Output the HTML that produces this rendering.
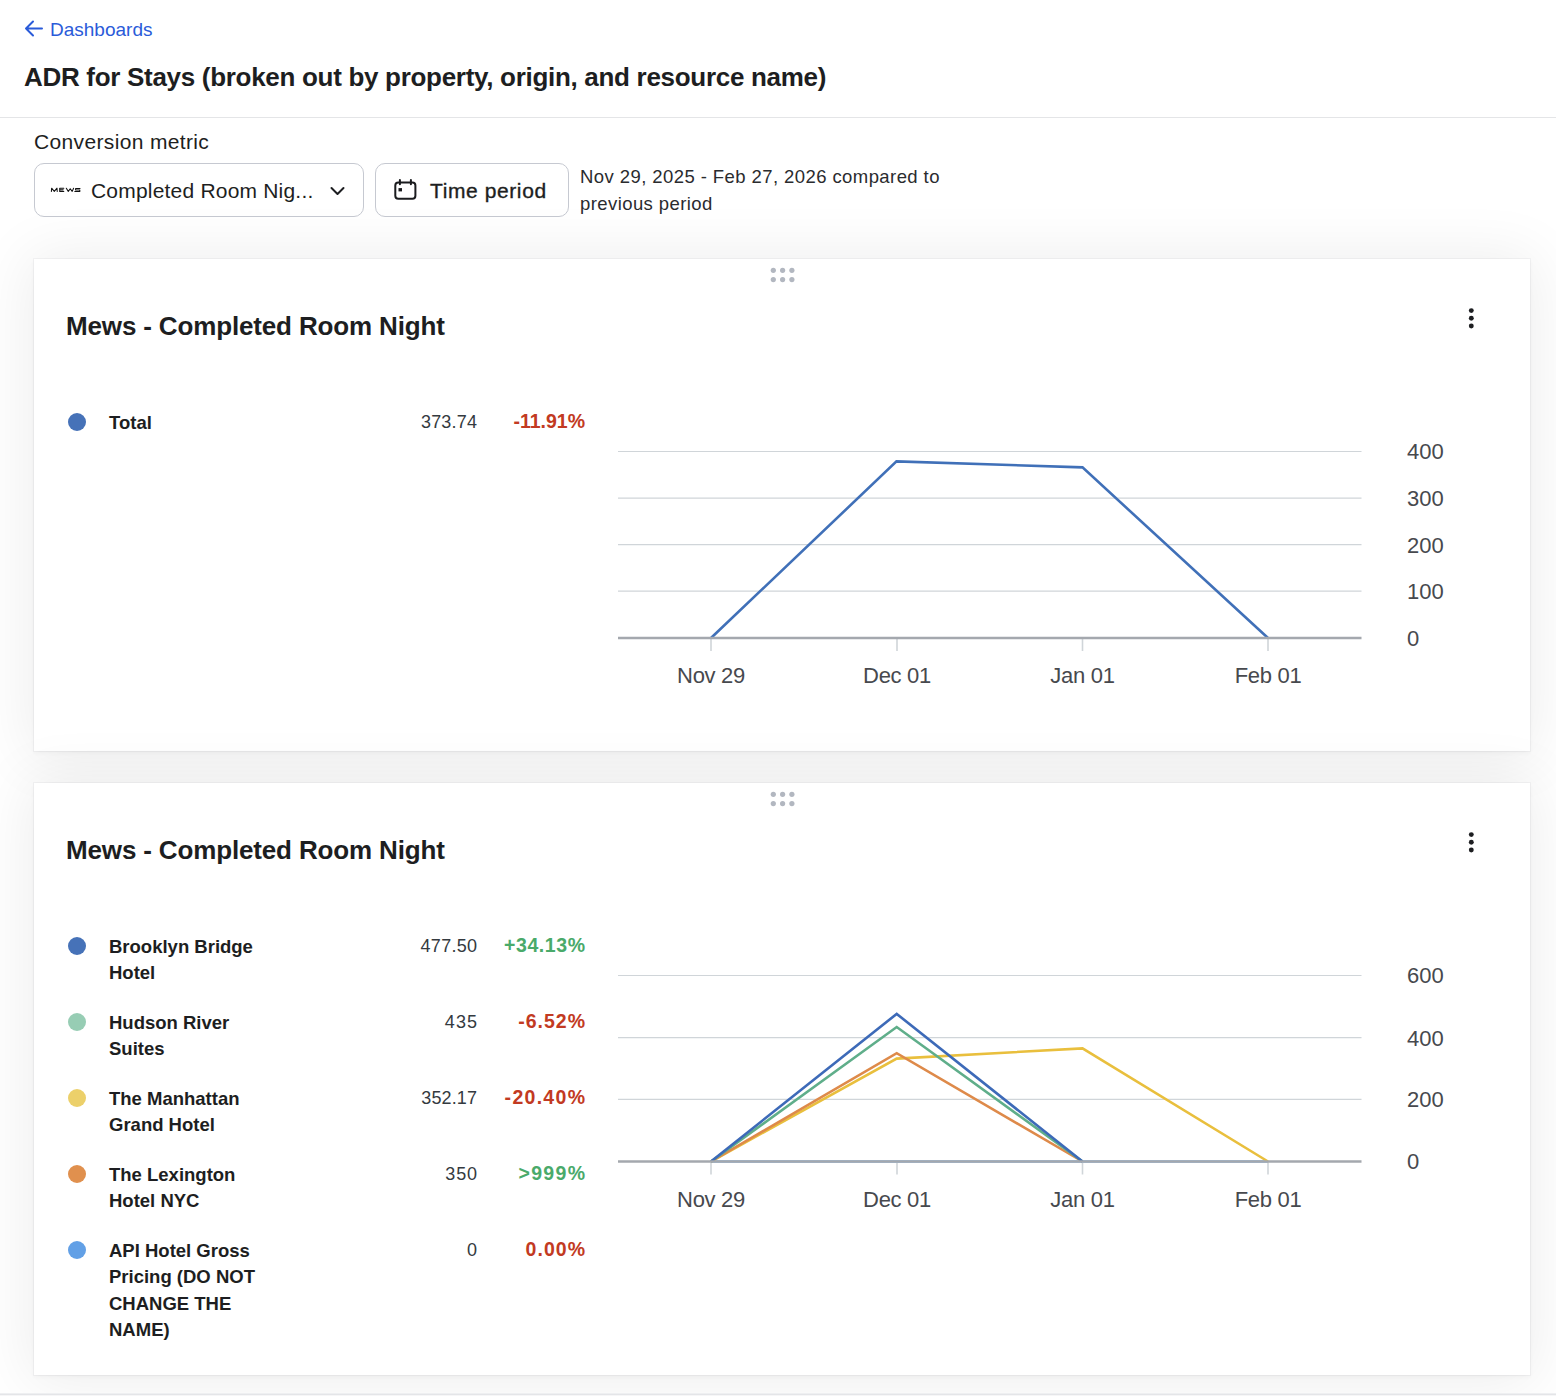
<!DOCTYPE html>
<html><head><meta charset="utf-8">
<style>
*{box-sizing:border-box;margin:0;padding:0}
html,body{width:1556px;height:1396px;overflow:hidden;background:#fff}
body{position:relative;font-family:"Liberation Sans",sans-serif;color:#1d1e21}
.abs{position:absolute;white-space:nowrap}
.back{left:50px;top:18px;font-size:19px;line-height:24px;color:#2a5bd9}
.title{left:24px;top:62px;font-size:26px;line-height:30px;font-weight:700;letter-spacing:-0.3px;color:#1d1e21}
.hr{left:0;top:117px;width:1556px;height:1px;background:#e4e5e7}
.lbl{left:34px;top:129px;font-size:21px;line-height:26px;color:#1d1e21;letter-spacing:0.35px}
.btn{position:absolute;border:1px solid #c6c9d1;border-radius:10px;background:#fff}
.btntext{font-size:21px;line-height:26px;color:#1d1e21}
.date{left:580px;top:164px;font-size:18.5px;line-height:26.7px;color:#2a2b2e;letter-spacing:0.42px;white-space:normal;width:400px}
.card{position:absolute;left:34px;width:1496px;background:#fff;box-shadow:0 0 0 1px rgba(30,30,45,0.04),0 2px 5px rgba(0,0,0,0.035),0 2px 56px 6px rgba(0,0,0,0.07)}
.ctitle{font-size:26px;line-height:30px;font-weight:700;color:#1d1e21;letter-spacing:-0.15px}
.leg{position:absolute;font-size:18.5px;line-height:26.6px;font-weight:700;color:#1d1e21;white-space:nowrap;width:200px}
.val{position:absolute;font-size:18px;line-height:26px;color:#343a40;text-align:right;width:100px;letter-spacing:0.2px}
.pct{position:absolute;font-size:19.5px;line-height:26px;font-weight:700;text-align:right;width:120px}
.red{color:#c23a22}.green{color:#4aaa6a}
.dot{position:absolute;width:18px;height:18px;border-radius:50%}
.axl{font-family:"Liberation Sans",sans-serif;font-size:22px;fill:#47494e}
</style></head><body>

<svg class="abs" style="left:24px;top:20px" width="19" height="17" viewBox="0 0 19 17"><path d="M9 1.5 L2 8.5 L9 15.5 M2 8.5 H18" fill="none" stroke="#2a5bd9" stroke-width="2" stroke-linecap="round" stroke-linejoin="round"/></svg>
<div class="abs back">Dashboards</div>
<div class="abs title">ADR for Stays (broken out by property, origin, and resource name)</div>
<div class="abs hr"></div>
<div class="abs lbl">Conversion metric</div>
<div class="btn" style="left:34px;top:163px;width:330px;height:54px">
  <div class="abs btntext" style="left:56px;top:14px;letter-spacing:0.2px">Completed Room Nig...</div>
  <svg class="abs" style="left:295px;top:22px" width="15" height="10" viewBox="0 0 15 10"><path d="M1.5 2 L7.5 8 L13.5 2" fill="none" stroke="#1d1e21" stroke-width="2" stroke-linecap="round" stroke-linejoin="round"/></svg>
</div>
<div class="btn" style="left:375px;top:163px;width:194px;height:54px">
  <div class="abs btntext" style="left:54px;top:14px;letter-spacing:0.6px;-webkit-text-stroke:0.35px #1d1e21">Time period</div>
</div>
<svg class="abs" style="left:392px;top:177px" width="26" height="26" viewBox="0 0 26 26"><rect x="3.3" y="5.6" width="20.1" height="16.1" rx="3" fill="none" stroke="#1a1b1e" stroke-width="2"/><path d="M7.9 3v4.2M18.9 3v4.2" stroke="#1a1b1e" stroke-width="2" stroke-linecap="round" fill="none"/><rect x="6.5" y="11.1" width="3.5" height="3.3" fill="#1a1b1e"/></svg>
<svg class="abs" style="left:50px;top:186px" width="32" height="8" viewBox="0 0 32 8"><g fill="none" stroke="#111" stroke-width="1.05" stroke-linejoin="round" stroke-linecap="round"><path d="M1.4 5.5L1.6 2.2L4.3 5.4L7 2.2L7.2 5.5"/><path d="M13.8 2.3H9.7V5.4H13.8M9.7 3.85H13.2"/><path d="M16.3 2.3L18.3 5.4L20.2 2.7L22.2 5.4L23.6 2.3"/><path d="M30 2.4H25.6V3.9H29.8V5.4H24.8"/></g></svg>
<div class="abs date">Nov 29, 2025 - Feb 27, 2026 compared to previous period</div>
<div class="card" style="top:259px;height:492px"></div>
<div class="card" style="top:783px;height:592px"></div>

<svg class="abs" style="left:768px;top:265px" width="30" height="20" viewBox="0 0 30 20"><circle cx="5.3" cy="5.3" r="2.6" fill="#b2b7c0"/><circle cx="5.3" cy="14.6" r="2.6" fill="#b2b7c0"/><circle cx="14.6" cy="5.3" r="2.6" fill="#b2b7c0"/><circle cx="14.6" cy="14.6" r="2.6" fill="#b2b7c0"/><circle cx="23.9" cy="5.3" r="2.6" fill="#b2b7c0"/><circle cx="23.9" cy="14.6" r="2.6" fill="#b2b7c0"/></svg>
<div class="abs ctitle" style="left:66px;top:311px">Mews - Completed Room Night</div>
<svg class="abs" style="left:1464px;top:303px" width="14" height="30" viewBox="0 0 14 30"><circle cx="7.3" cy="7.6" r="2.45" fill="#1d1e21"/><circle cx="7.3" cy="15.3" r="2.45" fill="#1d1e21"/><circle cx="7.3" cy="23" r="2.45" fill="#1d1e21"/></svg>
<div class="dot" style="left:67.7px;top:412.70000000000005px;background:#4672b8"></div>
<div class="leg" style="left:109px;top:409.6px">Total</div>
<div class="val" style="left:377px;top:408.6px"><span style="letter-spacing:0.2px;margin-right:-0.2px">373.74</span></div>
<div class="pct red" style="left:465px;top:408.3px"><span style="letter-spacing:0px;margin-right:-0px">-11.91%</span></div>
<svg class="abs" style="left:0;top:430px" width="1556" height="330" viewBox="0 430 1556 330">
<line x1="618" x2="1361.5" y1="451.5" y2="451.5" stroke="#d0d5d9" stroke-width="1.2"/>
<line x1="618" x2="1361.5" y1="498.1" y2="498.1" stroke="#d0d5d9" stroke-width="1.2"/>
<line x1="618" x2="1361.5" y1="544.7" y2="544.7" stroke="#d0d5d9" stroke-width="1.2"/>
<line x1="618" x2="1361.5" y1="591.2" y2="591.2" stroke="#d0d5d9" stroke-width="1.2"/>
<line x1="711" x2="711" y1="638" y2="651" stroke="#d0d5d9" stroke-width="1.6"/>
<line x1="897" x2="897" y1="638" y2="651" stroke="#d0d5d9" stroke-width="1.6"/>
<line x1="1082.5" x2="1082.5" y1="638" y2="651" stroke="#d0d5d9" stroke-width="1.6"/>
<line x1="1268" x2="1268" y1="638" y2="651" stroke="#d0d5d9" stroke-width="1.6"/>
<polyline points="711,638 896.5,461.4 1082.5,467.4 1268,638" fill="none" stroke="#4070b8" stroke-width="2.6" stroke-linejoin="miter"/>
<line x1="618" x2="1361.5" y1="638" y2="638" stroke="#a4a8ae" stroke-width="2.4"/>
<text class="axl" x="1407" y="459.3">400</text>
<text class="axl" x="1407" y="505.90000000000003">300</text>
<text class="axl" x="1407" y="552.5">200</text>
<text class="axl" x="1407" y="599.0">100</text>
<text class="axl" x="1407" y="645.8">0</text>
<text class="axl" x="711" y="683" text-anchor="middle" letter-spacing="-0.3">Nov 29</text>
<text class="axl" x="897" y="683" text-anchor="middle" letter-spacing="-0.3">Dec 01</text>
<text class="axl" x="1082.5" y="683" text-anchor="middle" letter-spacing="-0.3">Jan 01</text>
<text class="axl" x="1268" y="683" text-anchor="middle" letter-spacing="-0.3">Feb 01</text>
</svg>
<svg class="abs" style="left:768px;top:789px" width="30" height="20" viewBox="0 0 30 20"><circle cx="5.3" cy="5.3" r="2.6" fill="#b2b7c0"/><circle cx="5.3" cy="14.6" r="2.6" fill="#b2b7c0"/><circle cx="14.6" cy="5.3" r="2.6" fill="#b2b7c0"/><circle cx="14.6" cy="14.6" r="2.6" fill="#b2b7c0"/><circle cx="23.9" cy="5.3" r="2.6" fill="#b2b7c0"/><circle cx="23.9" cy="14.6" r="2.6" fill="#b2b7c0"/></svg>
<div class="abs ctitle" style="left:66px;top:835px">Mews - Completed Room Night</div>
<svg class="abs" style="left:1464px;top:827px" width="14" height="30" viewBox="0 0 14 30"><circle cx="7.3" cy="7.6" r="2.45" fill="#1d1e21"/><circle cx="7.3" cy="15.3" r="2.45" fill="#1d1e21"/><circle cx="7.3" cy="23" r="2.45" fill="#1d1e21"/></svg>
<div class="dot" style="left:67.7px;top:936.8000000000001px;background:#4672b8"></div>
<div class="leg" style="left:109px;top:933.7px">Brooklyn Bridge<br>Hotel</div>
<div class="val" style="left:377px;top:932.7px"><span style="letter-spacing:0.27px;margin-right:-0.27px">477.50</span></div>
<div class="pct green" style="left:465px;top:932.4000000000001px"><span style="letter-spacing:0.58px;margin-right:-0.58px">+34.13%</span></div>
<div class="dot" style="left:67.7px;top:1012.8000000000001px;background:#97cdb4"></div>
<div class="leg" style="left:109px;top:1009.7px">Hudson River<br>Suites</div>
<div class="val" style="left:377px;top:1008.7px"><span style="letter-spacing:1.07px;margin-right:-1.07px">435</span></div>
<div class="pct red" style="left:465px;top:1008.4000000000001px"><span style="letter-spacing:1.0px;margin-right:-1.0px">-6.52%</span></div>
<div class="dot" style="left:67.7px;top:1088.8px;background:#ecd06a"></div>
<div class="leg" style="left:109px;top:1085.7px">The Manhattan<br>Grand Hotel</div>
<div class="val" style="left:377px;top:1084.7px"><span style="letter-spacing:0.13px;margin-right:-0.13px">352.17</span></div>
<div class="pct red" style="left:465px;top:1084.4px"><span style="letter-spacing:1.29px;margin-right:-1.29px">-20.40%</span></div>
<div class="dot" style="left:67.7px;top:1164.8px;background:#e0904e"></div>
<div class="leg" style="left:109px;top:1161.7px">The Lexington<br>Hotel NYC</div>
<div class="val" style="left:377px;top:1160.7px"><span style="letter-spacing:0.8px;margin-right:-0.8px">350</span></div>
<div class="pct green" style="left:465px;top:1160.4px"><span style="letter-spacing:1.32px;margin-right:-1.32px">&gt;999%</span></div>
<div class="dot" style="left:67.7px;top:1240.8px;background:#62a0e6"></div>
<div class="leg" style="left:109px;top:1237.7px">API Hotel Gross<br>Pricing (DO NOT<br>CHANGE THE<br>NAME)</div>
<div class="val" style="left:377px;top:1236.7px"><span style="letter-spacing:0px;margin-right:-0px">0</span></div>
<div class="pct red" style="left:465px;top:1236.4px"><span style="letter-spacing:1.02px;margin-right:-1.02px">0.00%</span></div>
<svg class="abs" style="left:0;top:954px" width="1556" height="330" viewBox="0 954 1556 330">
<line x1="618" x2="1361.5" y1="975.5" y2="975.5" stroke="#d0d5d9" stroke-width="1.2"/>
<line x1="618" x2="1361.5" y1="1037.7" y2="1037.7" stroke="#d0d5d9" stroke-width="1.2"/>
<line x1="618" x2="1361.5" y1="1099.3" y2="1099.3" stroke="#d0d5d9" stroke-width="1.2"/>
<line x1="711" x2="711" y1="1161.5" y2="1174.5" stroke="#d0d5d9" stroke-width="1.6"/>
<line x1="897" x2="897" y1="1161.5" y2="1174.5" stroke="#d0d5d9" stroke-width="1.6"/>
<line x1="1082.5" x2="1082.5" y1="1161.5" y2="1174.5" stroke="#d0d5d9" stroke-width="1.6"/>
<line x1="1268" x2="1268" y1="1161.5" y2="1174.5" stroke="#d0d5d9" stroke-width="1.6"/>
<polyline points="711,1161.5 1268,1161.5" fill="none" stroke="#9cc2ee" stroke-width="3.2" stroke-linejoin="miter"/>
<polyline points="711,1161.5 896.7,1058.6 1082.5,1048.4 1268,1161.5" fill="none" stroke="#e9bf3d" stroke-width="2.6" stroke-linejoin="miter"/>
<polyline points="711,1161.5 896.7,1053.2 1082.5,1161.5" fill="none" stroke="#de8a4a" stroke-width="2.6" stroke-linejoin="miter"/>
<polyline points="711,1161.5 896.7,1027 1082.5,1161.5" fill="none" stroke="#5fae8a" stroke-width="2.6" stroke-linejoin="miter"/>
<polyline points="711,1161.5 896.7,1013.9 1082.5,1161.5" fill="none" stroke="#3d6ab8" stroke-width="2.6" stroke-linejoin="miter"/>
<line x1="618" x2="1361.5" y1="1161.5" y2="1161.5" stroke="#a4a8ae" stroke-width="2.4"/>
<text class="axl" x="1407" y="983.3">600</text>
<text class="axl" x="1407" y="1045.5">400</text>
<text class="axl" x="1407" y="1107.1">200</text>
<text class="axl" x="1407" y="1169.3">0</text>
<text class="axl" x="711" y="1206.5" text-anchor="middle" letter-spacing="-0.3">Nov 29</text>
<text class="axl" x="897" y="1206.5" text-anchor="middle" letter-spacing="-0.3">Dec 01</text>
<text class="axl" x="1082.5" y="1206.5" text-anchor="middle" letter-spacing="-0.3">Jan 01</text>
<text class="axl" x="1268" y="1206.5" text-anchor="middle" letter-spacing="-0.3">Feb 01</text>
</svg>
<div class="abs" style="left:0;top:1393px;width:1556px;height:1px;background:#eeeff1"></div><div class="abs" style="left:0;top:1394px;width:1556px;height:1px;background:#e4e5e8"></div><div class="abs" style="left:0;top:1395px;width:1556px;height:1px;background:#f6f6f7"></div>
</body></html>
